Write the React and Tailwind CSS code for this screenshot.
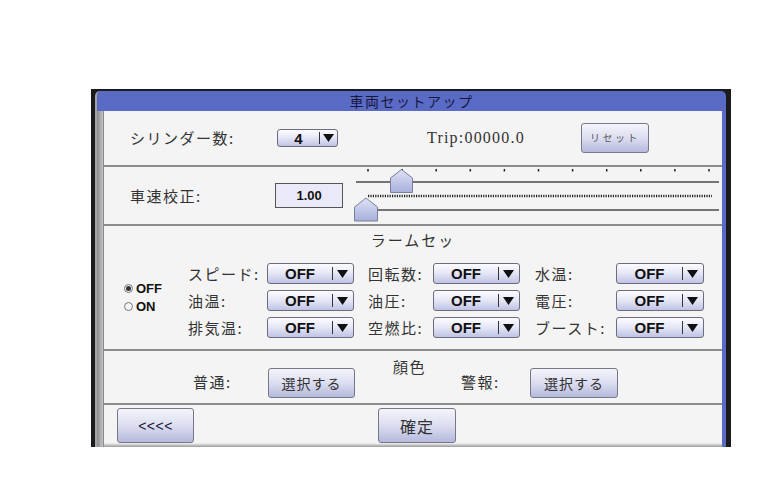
import React from "react";

const jp = "font-['Noto_Sans_CJK_JP','Noto_Sans_CJK_SC',sans-serif]";
const sans = "font-['Liberation_Sans',Arial,sans-serif]";

function Tri({ className = "" }) {
  return (
    <svg width="11" height="8" viewBox="0 0 11 8" className={className}>
      <polygon points="0,0 11,0 5.5,8" fill="#111" />
    </svg>
  );
}

function Drop({ w, value = "OFF" }) {
  return (
    <div
      className={`flex h-[21px] items-center rounded-[3px] border border-[#6c6c7c] bg-linear-to-b from-[#fcfcff] via-[#e4e6f6] to-[#bfc3e4] ${w}`}
    >
      <span className={`${sans} flex-1 text-center text-[15px] font-bold leading-none text-[#111]`}>
        {value}
      </span>
      <span className="h-[13px] w-px bg-[#333]" />
      <Tri className="ml-[4px] mr-[5px]" />
    </div>
  );
}

function Btn({ className = "", children }) {
  return (
    <div
      className={`flex items-center justify-center rounded-[3px] border border-[#77778a] bg-linear-to-b from-[#f4f4fb] via-[#dcdef0] to-[#b5b9dc] ${className}`}
    >
      {children}
    </div>
  );
}

function Label({ className = "", children }) {
  return (
    <span className={`${jp} text-[15px] leading-[20px] tracking-[1.5px] text-[#333] ${className}`}>
      {children}
    </span>
  );
}

function Divider() {
  return <div className="h-[2px] w-full bg-[#8c8c8c]" />;
}

// two-track calibration slider with tick dots and pentagon thumbs
function SpeedSlider() {
  const ticks = Array.from({ length: 11 }, (_, i) => 14 + i * 34.1);
  return (
    <svg width="368" height="57" viewBox="0 0 368 57">
      <defs>
        <linearGradient id="thumb" x1="0" y1="0" x2="0" y2="1">
          <stop offset="0" stopColor="#dfe2f6" />
          <stop offset="1" stopColor="#a7afdc" />
        </linearGradient>
      </defs>
      {ticks.map((x, i) => (
        <rect key={i} x={x - 0.75} y="2" width="1.5" height="2.5" fill="#222" />
      ))}
      <line x1="2" y1="15" x2="365" y2="15" stroke="#4a4a4a" strokeWidth="1.5" />
      <line
        x1="14"
        y1="29"
        x2="358"
        y2="29"
        stroke="#222"
        strokeWidth="2.5"
        strokeDasharray="1.2 1.2"
      />
      <line x1="2" y1="43" x2="365" y2="43" stroke="#4a4a4a" strokeWidth="1.5" />
      <polygon
        points="36.5,25.5 36.5,11 47.5,2.5 58.5,11 58.5,25.5"
        fill="url(#thumb)"
        stroke="#7a7f9a"
        strokeWidth="1"
      />
      <polygon
        points="0.5,54 0.5,40 12,31 23.5,40 23.5,54"
        fill="url(#thumb)"
        stroke="#7a7f9a"
        strokeWidth="1"
      />
    </svg>
  );
}

function Radio({ checked, label }) {
  return (
    <div className="flex items-center gap-[3px]">
      <span className="flex h-[9px] w-[9px] items-center justify-center rounded-full border border-[#777] bg-[#f4f4f4]">
        {checked && <span className="h-[5px] w-[5px] rounded-full bg-[#333]" />}
      </span>
      <span className={`${sans} text-[13px] font-bold leading-[18px] text-[#111]`}>{label}</span>
    </div>
  );
}

const alarms = [
  ["スピード:", "回転数:", "水温:"],
  ["油温:", "油圧:", "電圧:"],
  ["排気温:", "空燃比:", "ブースト:"],
];

export default function App() {
  return (
    <div className="h-[497px] w-[777px] overflow-hidden bg-white pl-[91px] pt-[89px]">
      <div className="flex h-[358px] w-[640px] flex-col bg-[#1b1b1d] pl-[4px] pr-[5px] pt-[2px]">
        <div className="flex flex-1 flex-col overflow-hidden rounded-t-[5px] border-l-2 border-[#a4a4a8] bg-[#5a6bc6]">
          {/* title bar */}
          <div className="flex h-[20px] items-center justify-center">
            <span className={`${jp} text-[14px] leading-none tracking-[1.5px] text-[#17173a]`}>
              車両セットアップ
            </span>
          </div>

          <div className="flex flex-1">
            <div className="w-[6px] bg-linear-to-r from-[#8c8c90] to-[#c4c4c8]" />
            <div className="flex w-[619px] flex-col border-l border-[#8a8a8a] bg-[#f4f4f4]">
              {/* cylinder count / trip */}
              <div className="flex h-[54px] items-center pl-[26px]">
                <Label className="w-[147px]">シリンダー数:</Label>
                <div className="flex h-[18px] w-[61px] items-center rounded-[3px] border border-[#6c6c7c] bg-linear-to-b from-[#fcfcff] via-[#e4e6f6] to-[#bfc3e4]">
                  <span className={`${sans} flex-1 text-center text-[15px] font-bold leading-none text-[#111]`}>
                    4
                  </span>
                  <span className="h-[12px] w-px bg-[#333]" />
                  <Tri className="ml-[3px] mr-[3px]" />
                </div>
                <span className="ml-[89px] w-[154px] font-['Liberation_Serif',serif] text-[16px] leading-none tracking-[1.2px] text-[#333]">
                  Trip:00000.0
                </span>
                <Btn className="h-[30px] w-[68px]">
                  <span className={`${jp} text-[10px] leading-none tracking-[2.5px] text-[#555]`}>リセット</span>
                </Btn>
              </div>
              <Divider />

              {/* speed calibration */}
              <div className="flex h-[57px] items-center pl-[26px]">
                <Label className="w-[146px]">車速校正:</Label>
                <div className="flex h-[25px] w-[68px] items-center justify-center border border-[#555] bg-[#e9e9f7]">
                  <span className={`${sans} text-[13px] font-bold leading-none text-[#111]`}>1.00</span>
                </div>
                <div className="ml-[11px]">
                  <SpeedSlider />
                </div>
              </div>
              <Divider />

              {/* alarm settings */}
              <div className="flex h-[123px] flex-col">
                <div className="mt-[4px] flex h-[20px] justify-center">
                  <Label className="tracking-[2px]">ラームセッ</Label>
                </div>
                <div className="mt-[13px] flex">
                  <div className="flex w-[84px] flex-col justify-center pb-[6px] pl-[20px]">
                    <Radio checked label="OFF" />
                    <Radio label="ON" />
                  </div>
                  <div className="flex flex-col gap-[6px]">
                    {alarms.map((row, r) => (
                      <div key={r} className="flex items-center">
                        <Label className="w-[79px] whitespace-nowrap">{row[0]}</Label>
                        <Drop w="w-[87px]" />
                        <Label className="ml-[14px] w-[65px] whitespace-nowrap">{row[1]}</Label>
                        <Drop w="w-[87px]" />
                        <Label className="ml-[15px] w-[81px] whitespace-nowrap">{row[2]}</Label>
                        <Drop w="w-[88px]" />
                      </div>
                    ))}
                  </div>
                </div>
              </div>
              <Divider />

              {/* colour selection */}
              <div className="flex h-[52px] items-start pl-[89px]">
                <Label className="mt-[21px] w-[75px]">普通:</Label>
                <Btn className="mt-[17px] h-[30px] w-[87px]">
                  <span className={`${jp} text-[14px] leading-none tracking-[1px] text-[#333]`}>選択する</span>
                </Btn>
                <Label className="ml-[38px] mt-[6px] w-[34px]">顔色</Label>
                <Label className="ml-[34px] mt-[21px] w-[69px]">警報:</Label>
                <Btn className="mt-[17px] h-[30px] w-[88px]">
                  <span className={`${jp} text-[14px] leading-none tracking-[1px] text-[#333]`}>選択する</span>
                </Btn>
              </div>
              <Divider />

              {/* navigation */}
              <div className="flex h-[42px] flex-col">
                <div className="flex items-start pl-[13px] pt-[3px]">
                  <Btn className="h-[35px] w-[77px]">
                    <span className={`${sans} text-[14px] leading-none tracking-[0.5px] text-[#1a1a3a]`}>&lt;&lt;&lt;&lt;</span>
                  </Btn>
                  <Btn className="ml-[184px] h-[35px] w-[78px]">
                    <span className={`${jp} text-[16px] leading-none tracking-[1px] text-[#333]`}>確定</span>
                  </Btn>
                </div>
                <div className="mt-auto h-[4px] bg-linear-to-b from-transparent to-[#9a9a9a]" />
              </div>
            </div>
            <div className="w-[4px] bg-[#5a6bc6]" />
          </div>
        </div>
      </div>
    </div>
  );
}
